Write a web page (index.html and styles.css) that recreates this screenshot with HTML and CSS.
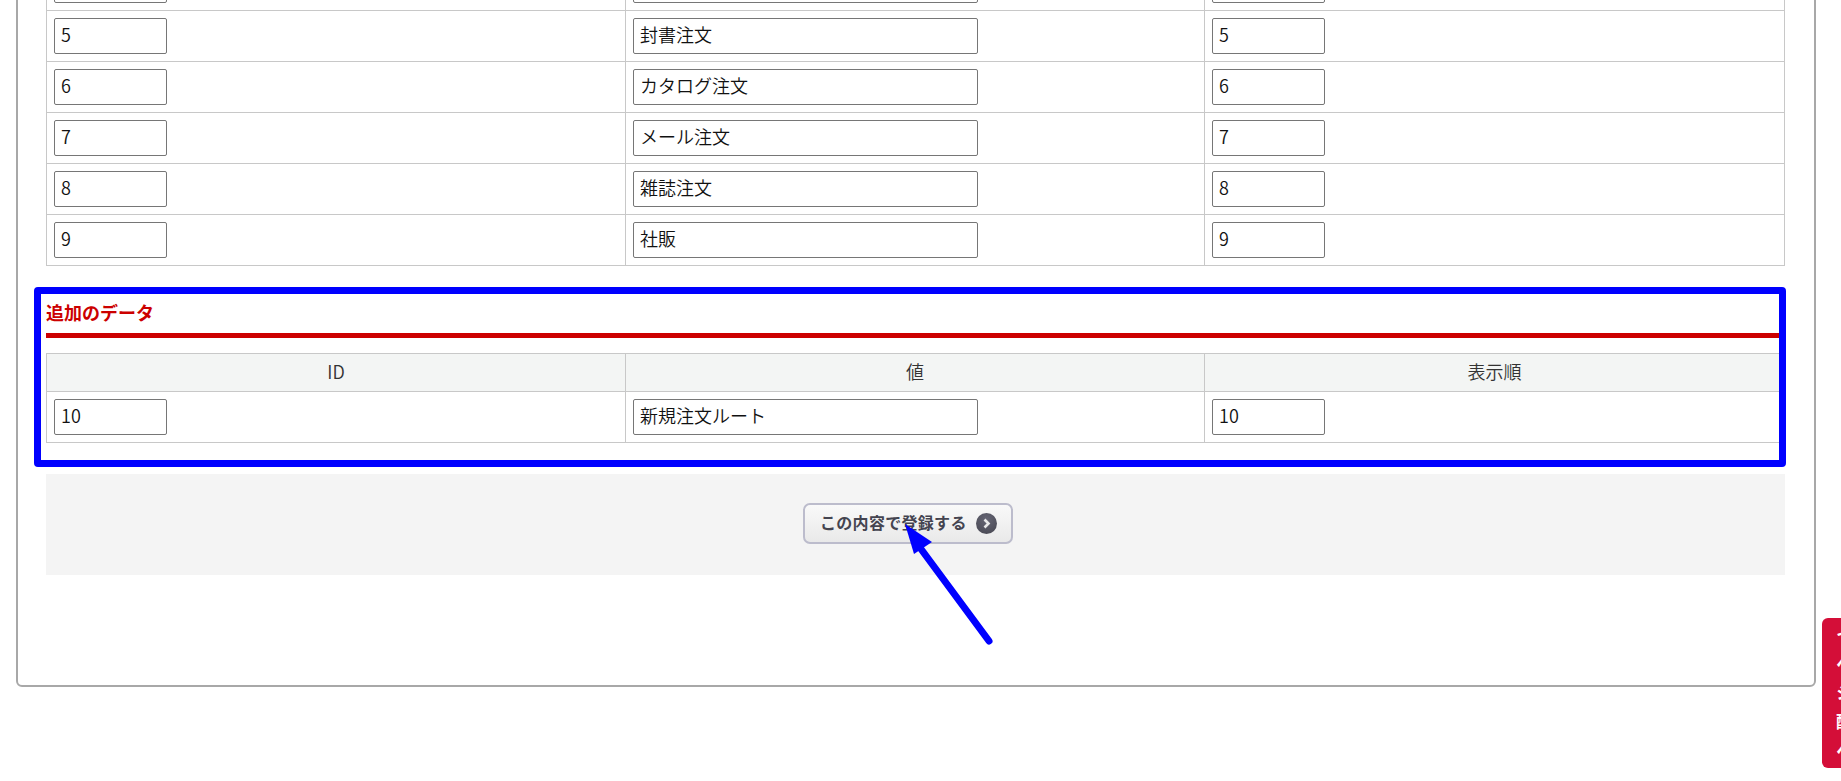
FILE: index.html
```html
<!DOCTYPE html>
<html lang="ja">
<head>
<meta charset="utf-8">
<title>追加のデータ</title>
<link rel="stylesheet" href="styles.css">
</head>
<body>
<main class="card">
  <table class="data-table">
    <colgroup><col class="col-a"><col class="col-b"><col class="col-c"></colgroup>
    <tbody>
      <tr><td><input class="field field-short" value="4"></td><td><input class="field field-long" value=""></td><td><input class="field field-short" value="4"></td></tr>
      <tr><td><input class="field field-short" value="5"></td><td><input class="field field-long" value="封書注文"></td><td><input class="field field-short" value="5"></td></tr>
      <tr><td><input class="field field-short" value="6"></td><td><input class="field field-long" value="カタログ注文"></td><td><input class="field field-short" value="6"></td></tr>
      <tr><td><input class="field field-short" value="7"></td><td><input class="field field-long" value="メール注文"></td><td><input class="field field-short" value="7"></td></tr>
      <tr><td><input class="field field-short" value="8"></td><td><input class="field field-long" value="雑誌注文"></td><td><input class="field field-short" value="8"></td></tr>
      <tr><td><input class="field field-short" value="9"></td><td><input class="field field-long" value="社販"></td><td><input class="field field-short" value="9"></td></tr>
    </tbody>
  </table>

  <h3 class="section-title">追加のデータ</h3>

  <table class="data-table">
    <colgroup><col class="col-a"><col class="col-b"><col class="col-c"></colgroup>
    <thead>
      <tr><th>ID</th><th>値</th><th>表示順</th></tr>
    </thead>
    <tbody>
      <tr><td><input class="field field-short" value="10"></td><td><input class="field field-long" value="新規注文ルート"></td><td><input class="field field-short" value="10"></td></tr>
    </tbody>
  </table>

  <div class="actions">
    <button class="submit" type="button">
      <span class="submit-label">この内容で登録する</span>
      <span class="submit-icon">
        <svg viewBox="0 0 21 21" width="21" height="21" aria-hidden="true"><path d="M8.5 6.5 12.5 10.5 8.5 14.5" fill="none" stroke="#e8e8e8" stroke-width="2.6"/></svg>
      </span>
    </button>
  </div>
</main>

<div class="highlight-box"></div>

<svg class="arrow" viewBox="0 0 100 130" width="100" height="130" aria-hidden="true">
  <path d="M94 126 26 34" fill="none" stroke="#0000ff" stroke-width="7" stroke-linecap="round"/>
  <path d="M10 9 19 39 37 27Z" fill="#0000ff"/>
</svg>

<aside class="side-tab"><span>イヘシ配ヘ</span></aside>
</body>
</html>
```

FILE: styles.css
```css
* {
  box-sizing: border-box;
}

html,
body {
  margin: 0;
  height: 781px;
  overflow: hidden;
  background: #fff;
}

body {
  font-family: "Noto Sans CJK JP", "Noto Sans", sans-serif;
  font-size: 18px;
  font-weight: 350;
  color: #333;
}

.card {
  width: 1800px;
  margin: -60px 0 0 16px;
  padding: 17px 28px 110px;
  border: 2px solid #a8a8a8;
  border-radius: 6px;
}

.data-table {
  width: 1738px;
  table-layout: fixed;
  border-collapse: collapse;
}

.col-a,
.col-b {
  width: 579px;
}

.col-c {
  width: 580px;
}

.data-table th,
.data-table td {
  border: 1px solid #c8c8c8;
}

.data-table td {
  height: 51px;
  padding: 7px;
  vertical-align: top;
}

.data-table th {
  height: 38px;
  padding: 0 0 4px;
  background: #f3f5f4;
  font-size: 18px;
  font-weight: 350;
  line-height: 30px;
  text-align: center;
}

.field {
  display: block;
  height: 36px;
  padding: 0 6px 4px;
  border: 1px solid #767676;
  border-radius: 2px;
  background: #fff;
  color: #111;
  font: 350 18px "Noto Sans CJK JP", "Noto Sans", sans-serif;
}

.field-short {
  width: 113px;
}

.field-long {
  width: 345px;
}

.section-title {
  margin: 37px 0 15px;
  padding-bottom: 12px;
  border-bottom: 5px solid #cc0000;
  color: #cc0000;
  font-size: 18px;
  font-weight: 700;
  line-height: 18px;
}

.actions {
  display: flex;
  justify-content: center;
  width: 1739px;
  margin-top: 31px;
  padding: 29px 15px 31px 0;
  background: #f4f4f4;
}

.submit {
  display: flex;
  align-items: center;
  gap: 9px;
  width: 210px;
  height: 41px;
  padding: 0 14px 0 15px;
  border: 2px solid #bcbccc;
  border-radius: 7px;
  background: linear-gradient(#f9f9f9, #e9e9e9);
  color: #444450;
  font: 700 16px "Noto Sans CJK JP", "Noto Sans", sans-serif;
  letter-spacing: 0.3px;
  white-space: nowrap;
}

.submit-label {
  padding-bottom: 4px;
}

.submit-icon {
  display: flex;
  width: 21px;
  height: 21px;
  border-radius: 50%;
  background: radial-gradient(circle at 50% 30%, #666675, #45454f);
}

.highlight-box {
  position: absolute;
  top: 287px;
  left: 34px;
  width: 1752px;
  height: 180px;
  border: 7px solid #0000ff;
  border-radius: 4px;
}

.arrow {
  position: absolute;
  top: 515px;
  left: 895px;
}

.side-tab {
  position: absolute;
  top: 618px;
  right: 0;
  width: 19px;
  height: 150px;
  overflow: hidden;
  padding: 8px 0 0 10px;
  border-radius: 6px 0 0 6px;
  background: #d40e38;
  color: #fff;
  font-size: 17px;
  font-weight: 700;
}

.side-tab span {
  display: block;
  writing-mode: vertical-rl;
  letter-spacing: 12px;
  white-space: nowrap;
}
```
